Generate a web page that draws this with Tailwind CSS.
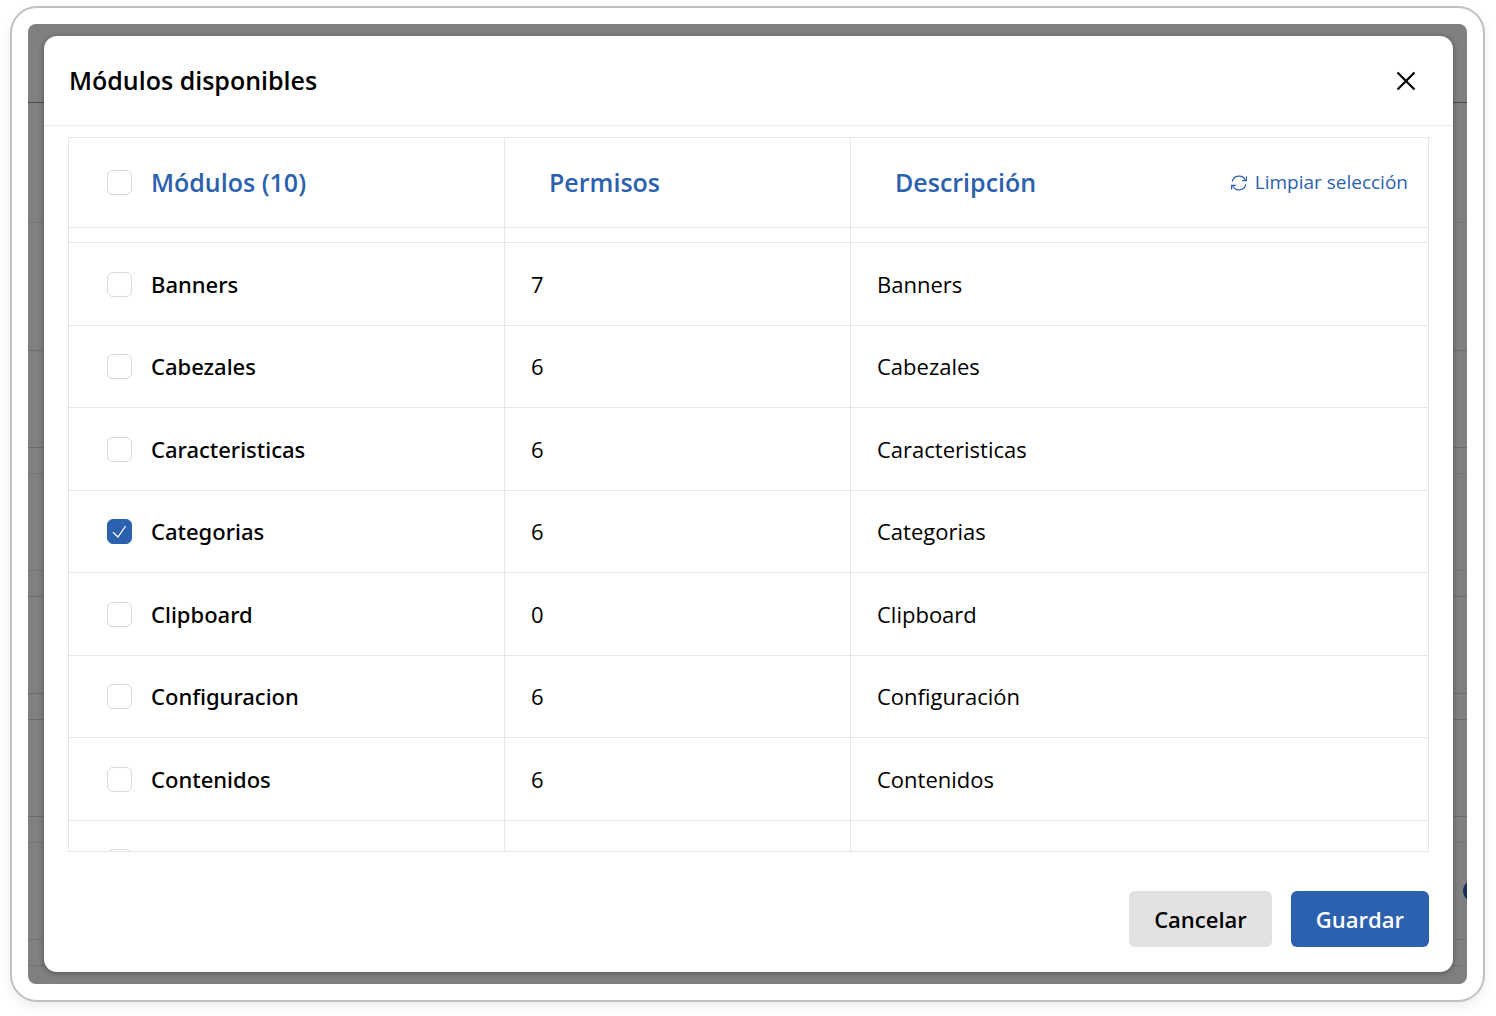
<!DOCTYPE html>
<html lang="es">

<head>
  <meta charset="UTF-8" />
  <meta name="viewport" content="width=device-width, initial-scale=1.0" />
  <title>Módulos disponibles</title>
  <script src="https://cdn.jsdelivr.net/npm/@tailwindcss/browser@4"></script>
</head>

<body class="min-h-screen bg-white pt-[6px] pr-[11px] pb-[14px] pl-[10px] font-['Open_Sans','Noto_Sans',sans-serif] text-black">

  <div class="rounded-[27px] border-2 border-[#c0c0c0] bg-white p-4 shadow-[0_4px_12px_rgba(0,0,0,0.08)]">
    <div class="relative grid overflow-hidden rounded-lg bg-[#808080]">

      <!-- PAGE BEHIND THE MODAL -->
      <div class="col-start-1 row-start-1" aria-hidden="true">
        <div class="h-[79px] border-b border-[#4d4d4d]"></div>
        <div class="h-[120px] border-b border-[#757575]"></div>
        <div class="h-[128px] border-b border-[#6e6e6e]"></div>
        <div class="h-[97px] border-b border-[#6e6e6e]"></div>
        <div class="h-[26px] border-b border-[#757575]"></div>
        <div class="h-[97px] border-b border-[#757575]"></div>
        <div class="h-[26px] border-b border-[#6e6e6e]"></div>
        <div class="h-[97px] border-b border-[#6e6e6e]"></div>
        <div class="h-[26px] border-b border-[#6e6e6e]"></div>
        <div class="h-[97px] border-b border-[#6e6e6e]"></div>
        <div class="h-[26px] border-b border-[#757575]"></div>
        <div class="h-[97px] border-b border-[#757575]"></div>
        <div class="h-[26px] border-b border-[#757575]"></div>
        <span class="absolute -right-[18px] bottom-[82px] size-[22px] rounded-full bg-[#17315c]"></span>
      </div>

      <!-- MODAL -->
      <div role="dialog" aria-labelledby="modal-title" class="col-start-1 row-start-1 mt-3 mr-[14px] mb-3 ml-4 flex flex-col rounded-[13px] bg-white shadow-[0_1px_6px_rgba(0,0,0,0.35)]">
        <div class="flex h-[90px] items-center justify-between border-b border-[#ececec] pr-[37px] pl-[25px]">
          <h2 id="modal-title" class="text-[25px] font-semibold">Módulos disponibles</h2>
          <button type="button" aria-label="Cerrar">
            <svg class="size-5" viewBox="0 0 20 20" fill="none" stroke="currentColor" stroke-width="2.2">
              <path d="M1.5 1.5l17 17M18.5 1.5l-17 17" />
            </svg>
          </button>
        </div>

        <div class="mx-6 mt-[11px] h-[715px] overflow-hidden border border-[#e6e6e6]">
          <table class="w-full table-fixed border-separate border-spacing-0 text-left">
            <colgroup>
              <col class="w-[436px]" />
              <col class="w-[346px]" />
              <col />
            </colgroup>
            <thead class="text-[25px] text-[#2b61ae]">
              <tr class="h-[90px]">
                <th class="border-r border-b border-[#e6e6e6] pl-[38px] font-semibold">
                  <div class="flex items-center gap-[19px]">
                    <input type="checkbox" id="all" class="size-[25px] appearance-none rounded-md border border-[#d9d9d9] bg-white" />
                    <label for="all">Módulos (10)</label>
                  </div>
                </th>
                <th class="border-r border-b border-[#e6e6e6] pl-11 font-semibold">Permisos</th>
                <th class="border-b border-[#e6e6e6] pr-5 pl-11 font-semibold">
                  <div class="flex items-center justify-between">
                    <span>Descripción</span>
                    <button type="button" id="clearBtn" class="flex items-center gap-2 text-[19px] font-normal">
                      <svg class="size-4" viewBox="0 0 16 16" fill="none" stroke="currentColor" stroke-width="1.2">
                        <path d="M1.2 6.6A7 7 0 0 1 14.4 5.2M14.8 9.4A7 7 0 0 1 1.6 10.8" />
                        <path d="M15.4 1.4V5.6H11.2M.6 14.6V10.4H4.8" />
                      </svg>
                      Limpiar selección
                    </button>
                  </div>
                </th>
              </tr>
            </thead>
            <tbody id="modules" class="text-[22px]">
              <tr class="h-[15px]">
                <td class="border-r border-b border-[#e6e6e6]"></td>
                <td class="border-r border-b border-[#e6e6e6]"></td>
                <td class="border-b border-[#e6e6e6]"></td>
              </tr>
            </tbody>
          </table>
        </div>

        <div class="mx-6 mt-[39px] mb-[25px] flex justify-end gap-[19px] text-[22px] font-semibold">
          <button type="button" class="h-14 rounded-md bg-[#e2e2e2] px-[25px]">Cancelar</button>
          <button type="button" class="h-14 rounded-md bg-[#2b61ae] px-[25px] text-white">Guardar</button>
        </div>
      </div>
    </div>
  </div>

  <script>
    const modules = [
      { name: "Banners", permissions: 7, description: "Banners" },
      { name: "Cabezales", permissions: 6, description: "Cabezales" },
      { name: "Caracteristicas", permissions: 6, description: "Caracteristicas" },
      { name: "Categorias", permissions: 6, description: "Categorias", checked: true },
      { name: "Clipboard", permissions: 0, description: "Clipboard" },
      { name: "Configuracion", permissions: 6, description: "Configuración" },
      { name: "Contenidos", permissions: 6, description: "Contenidos" },
      { name: "", permissions: "", description: "" }
    ];

    const tbody = document.getElementById("modules");

    modules.forEach((m, i) => {
      const row = document.createElement("tr");
      row.className = "h-[82px] even:h-[83px]";
      row.innerHTML = `
        <td class="border-r border-b border-[#e6e6e6] pl-[38px]">
          <div class="flex items-center gap-[19px]">
            <span class="grid">
              <input type="checkbox" id="module-${i}" ${m.checked ? "checked" : ""}
                class="peer col-start-1 row-start-1 size-[25px] appearance-none rounded-md border border-[#d9d9d9] bg-white checked:border-[#2b61ae] checked:bg-[#2b61ae]" />
              <svg class="pointer-events-none invisible col-start-1 row-start-1 size-[25px] peer-checked:visible" viewBox="0 0 25 25" fill="none" stroke="white" stroke-width="1.3">
                <path d="M6 13.2l5 4.8 7.6-11" />
              </svg>
            </span>
            <label for="module-${i}" class="font-['Noto_Sans','Open_Sans',sans-serif] font-medium">${m.name}</label>
          </div>
        </td>
        <td class="border-r border-b border-[#e6e6e6] pl-[26px]">${m.permissions}</td>
        <td class="border-b border-[#e6e6e6] pl-[26px]">${m.description}</td>
      `;
      tbody.appendChild(row);
    });

    // CLEAR SELECTION
    document.getElementById("clearBtn").addEventListener("click", () => {
      document.querySelectorAll("input[type=checkbox]").forEach((box) => {
        box.checked = false;
      });
    });
  </script>
</body>

</html>
